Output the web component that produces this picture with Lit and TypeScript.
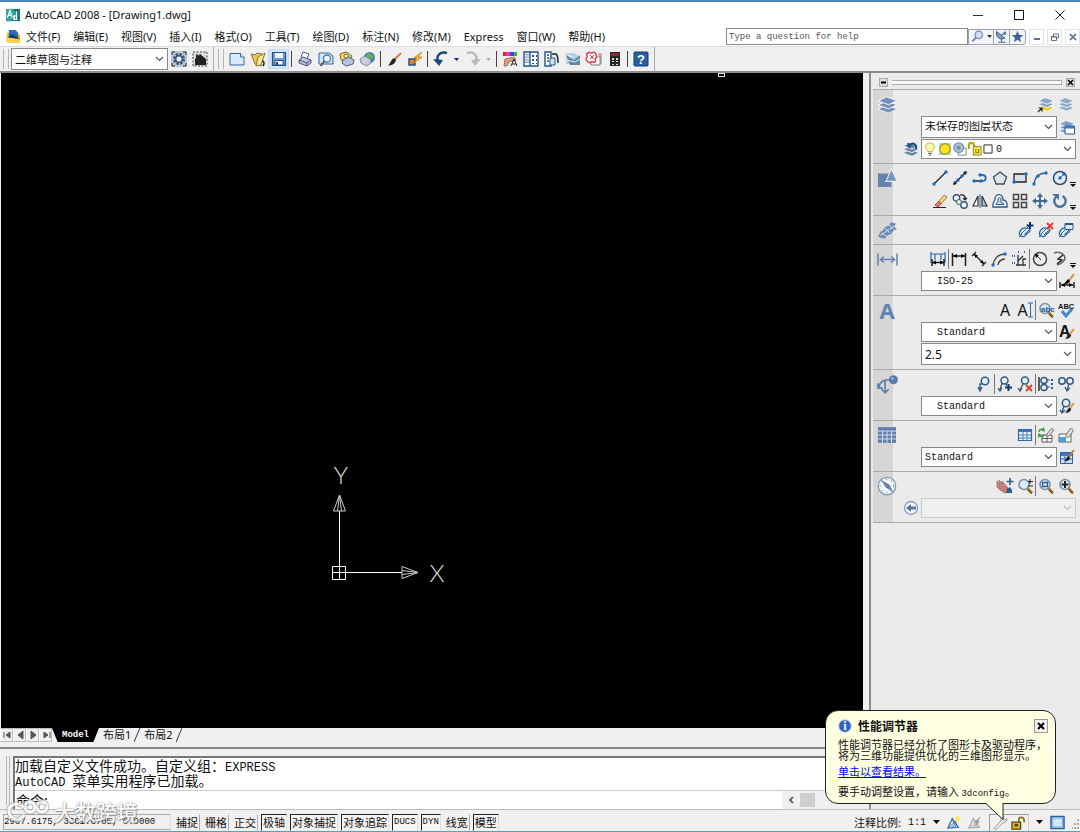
import { LitElement, html, svg, css } from "lit";
import { customElement, property } from "lit/decorators.js";

const B = "#2b578c";
const K = "#222";

const layers = (c: string, c2: string) => svg`
  <path d="M0 12 7 8.500l9 3.200-7 3.500z" fill="${c2}" stroke="#fff" stroke-width=".6"/>
  <path d="M0 8.500 7 5l9 3.200-7 3.500z" fill="${c}" stroke="#fff" stroke-width=".8"/>
  <path d="M0 5 7 1.500l9 3.200-7 3.500z" fill="${c}" stroke="#fff" stroke-width=".8"/>`;
const dot = (x: number, y: number) => svg`<circle cx="${x}" cy="${y}" r="1.700" fill="#1870c8"/>`;
const brush = svg`<path d="m15 5-5 6" stroke="#e0a050" stroke-width="2"/><path d="m10.500 9.500 1.800 1.500c-1 3-3.300 4-6.300 4 2-1.500 2-4 4.500-5.500z" fill="#222"/>`;
const magnifier = svg`<path d="m10 10 5 5" stroke="#b0741f" stroke-width="2.600"/><path d="m11 12 3.500 3.500" stroke="#3c2a12" stroke-width="1"/><circle cx="7" cy="6.500" r="5" fill="#dcebf8" stroke="#7b8ea3" stroke-width="1.600"/>`;
const bolt = svg`<path d="M15 1 7 7h3l-4 6 9-7h-4z" fill="#ffc928" stroke="#a06a10" stroke-width=".7"/>`;
const annot = (c: string) => svg`<path d="M1 15 6 4l7 10z" fill="none" stroke="${c}" stroke-width="1.500"/><path d="m2 14 11-9M5 14l6-5M6 5l4 9" stroke="${c}" fill="none"/>`;
const hatch = svg`<path d="M2 13.500C0 10 4 5 8 6c4 0 5 2 3 4s-2 1-3 3-4 2-6 .5z" fill="#dce9f6" stroke="#2e6199" stroke-width="1.200"/><path d="M3 12 9 6M6 13l5-5M1 15l3-3m3-4 4-4" fill="none" stroke="#2e6199"/>`;

const icons: Record<string, unknown> = {
  app: svg`<path d="M0 1h16v14H0z" fill="#187878"/><path d="M0 1h8l3 5-5 9H0z" fill="#39a59d"/><path d="m1.500 11 3-8 2.500 8M2.500 8.500h4M9 14V9.500M12 4v9H9.500V9H13" fill="none" stroke="#fff" stroke-width="1.400"/>`,
  doc: svg`<path d="M1 4h11l3 3v8H1z" fill="#f2b91d"/><path d="M3 1h7l3 3v6H3z" fill="#2f6cb0"/><path d="m2 9 4-4 9 6v1z" fill="#183f72"/><path d="m0 6 2 3 13 2v4H1z" fill="#ffd24a"/>`,
  gear: svg`<path d="M0 0h16v16H0z" fill="#b7c6d8"/><path d="M1 4V1h3m8 0h3v3m0 8v3h-3m-8 0H1v-3" stroke="#333" fill="none"/><circle cx="8" cy="8" r="4.500" fill="none" stroke="#3e5572" stroke-width="3" stroke-dasharray="2.300 1.200"/><circle cx="8" cy="8" r="3.300" fill="#e8edf3" stroke="#3e5572" stroke-width="1.500"/>`,
  home: svg`<path d="M1 1h14v14H1z" fill="#ddd" stroke="#444" stroke-dasharray="2 1.500"/><path d="m8 3 6 5v6H3V8l1-1V3.500h2V5z" fill="#222"/>`,
  new: svg`<path d="M1 2.500h10.500L15 6v8H1z" fill="#d7ebf9" stroke="#34659c"/><path d="M11.500 2.500V6H15" fill="#fff" stroke="#34659c"/>`,
  open: svg`<path d="m1 3 4 1 2-2 5 1-1 12-6-2z" fill="#e8c657" stroke="#8c7430"/><path d="m8 6 7-4-4 12-5 1z" fill="#f7e6a0" stroke="#8c7430"/><path d="M12 10c2 0 3 2 1 5" fill="none" stroke="#222" stroke-width="1.500"/>`,
  save: svg`<path d="M1.500 1.500h13v13h-13z" fill="#6a9bd4" stroke="#254f85" stroke-width="1.200"/><path d="M4 2h8v5H4z" fill="#f2f7fc"/><path d="M4 9.500h8V14H4z" fill="#fff" stroke="#254f85"/><path d="M5 11h2v3H5z" fill="#254f85"/>`,
  print: svg`<path d="m4 6 2-5 6 2-2 5z" fill="#fff" stroke="#555c88"/><path d="m2 9 4-3 8 3v3l-4 3-8-3z" fill="#bfc5df" stroke="#4d5583"/><path d="m2 9 8 3 4-3m-4 3v3" fill="none" stroke="#4d5583"/>`,
  preview: svg`<path d="M1 2h10l4 3v8H1z" fill="#cfe5f6" stroke="#34659c"/><circle cx="9" cy="7.500" r="3.500" fill="#eef7ff" stroke="#56799e" stroke-width="1.300"/><path d="m6.500 10-4 5" stroke="#555" stroke-width="2"/>`,
  publish: svg`<path d="m1 3 6-2 6 4-3 6-8-2z" fill="#f5d64b" stroke="#7d6d2b"/><path d="m4 9 6-3 5 3-1 4-7 2-4-3z" fill="#b8c3e0" stroke="#4d5f88"/><circle cx="7" cy="5" r="2" fill="#fff" stroke="#7d6d2b"/>`,
  web: svg`<circle cx="9.500" cy="6.500" r="5.500" fill="#3f82b5"/><path d="M6 3c3-2 4 1 7 1 2 3-2 5-4 4S6 5 6 3z" fill="#68ae5b"/><path d="m0 8 5-3 6 4-1 4-4 2-5-3z" fill="#c7cee0" stroke="#6a7898" stroke-width=".8"/>`,
  brush: svg`<path d="m15 2-7 7" stroke="#c98540" stroke-width="2.200"/><path d="m8 7 2 2c-1 4-4 5-8 6 2-2 2-5 6-8z" fill="#222"/>`,
  match: svg`<path d="M2 8h6v6H2z" fill="#e77c4c" stroke="#294f83" stroke-width="1.500"/>${bolt}`,
  undo: svg`<path d="M14 2C7 0 3 5 5 10" fill="none" stroke="#1d4778" stroke-width="2.500"/><path d="m0 8 10 1-4 6z" fill="#1d4778"/>`,
  redo: svg`<path d="M2 2c7-2 11 3 9 8" fill="none" stroke="#bababa" stroke-width="2.500"/><path d="M16 8 6 9l4 6z" fill="#bababa"/>`,
  props: svg`<path d="M1 1h3v4H1z" fill="#e22"/><path d="M4 1h4v4H4z" fill="#ec30c8"/><path d="M8 1h4v4H8z" fill="#2a4ae0"/><path d="M12 1h3v4h-3z" fill="#20bd42"/><path d="m2 15 1-7 9-2 2 3-7 2-2 4z" fill="#dca07c" stroke="#84503b" stroke-width=".7"/><path d="m9 15 3-7 3 7m-5-2h4" fill="none" stroke="#222"/>`,
  design: svg`<path d="M1 1h14v14H1zM7 1v14" fill="#fff" stroke="#25528a" stroke-width="1.400"/><path d="M3 3v10M5 3v10" stroke="#25528a" stroke-dasharray="1.500 1"/><path d="M9 4h2v2H9zm4 0h1v2h-1zM9 8h2v2H9zm4 0h1v2h-1zm-4 4h2v1H9zm4 0h1v1h-1z" fill="#25528a"/>`,
  palette: svg`<path d="M1 1h6v14H1z" fill="#fff" stroke="#25528a" stroke-width="1.400"/><path d="M3 4h2M3 7h2m-2 3h2" stroke="#25528a" stroke-width="1.500"/><path d="M6 7h5v7H6z" fill="#d5e6f4" stroke="#25528a"/><path d="M8 3h4c2 1 2 4 2 9" fill="none" stroke="#222" stroke-width="1.500"/>`,
  sheets: svg`<path d="M1 2h9l5 4v7H1z" fill="#b9cfdf"/><path d="m1 4 8 5 6-5v10H5z" fill="#5f8aa9"/><path d="m1 9 9 2 5-3M2 4l6 2" stroke="#e8f1f7" fill="none"/>`,
  markup: svg`<path d="M5 5h9v9H5zM7 3h8v10" fill="#fff" stroke="#777"/><path d="M0 1h12v11H0z" fill="#fff"/><path d="M2 2c2-2 3 1 4 0 3-2 4 1 4 2s2 2 0 3 1 3-1 4-2-1-4 0-2 1-4-1-1-2 0-4-2-3 1-4z" fill="none" stroke="#e33b4b" stroke-width="1.500"/><path d="m4 4 4 4m0-4L4 8" stroke="#e33b4b"/>`,
  calc: svg`<path d="M3 1h10v14H3z" fill="#252525"/><path d="M4 2h8v3H4z" fill="#8d2b2b"/><path d="M5 7h2v2H5zm4 0h2v2H9zm-4 3h2v1H5zm4 0h2v1H9zm-4 3h2v1H5zm4 0h2v1H9z" fill="#ddd"/>`,
  help: svg`<rect x="1" y="1" width="14" height="14" rx="1" fill="#285f9d" stroke="#173f70"/><text x="8" y="13" text-anchor="middle" font-family="Liberation Sans" font-size="13" font-weight="bold" fill="#fff">?</text>`,
  search: svg`<path d="m6.500 9-5 5" stroke="#7889a8" stroke-width="2.500"/><circle cx="9.500" cy="6" r="4.500" fill="#d2dff1" stroke="#7889b5" stroke-width="1.500"/>`,
  dish: svg`<path d="M2 2c-1 7 5 11 10 8zM8 7l5-5M8 10v4m-4 1h9" fill="#8da8ce" stroke="#3f5c8c" stroke-width="1.300"/><circle cx="12" cy="4" r="2" fill="#66789a"/>`,
  star: svg`<path d="m8 1 2 5 5 .3-4 3.400 1.500 5.300L8 12l-4.500 3L5 9.700 1 6.300 6 6z" fill="#405e90"/>`,
  layersBig: layers("#7390b8", "#7390b8"),
  layersY: svg`${layers("#8aa7c4", "#f0c633")}<path d="m0 16 4-4m-3.500 0H4v3.500" stroke="#222" fill="none" stroke-width="1.200"/>`,
  layers: layers("#8facc8", "#8facc8"),
  layerMgr: svg`${layers("#7f9cc4", "#7f9cc4")}<path d="M6 7h9.500v8H6z" fill="#fff" stroke="${B}"/><path d="M6 7h9.500v2.500H6z" fill="#347ac0"/>`,
  layerPrev: svg`${layers("#6d86a8", "#6d86a8")}<path d="M13 8c1-5-3-7-6-4" fill="none" stroke="#224b7f" stroke-width="2"/><path d="m4 2 5 1-3 5z" fill="#224b7f"/>`,
  bulb: svg`<path d="M5.500 11C5 9 3 8 3 5.500a5 4.500 0 0 1 10 0C13 8 11 9 10.500 11z" fill="#fff8a8" stroke="#b9a632"/><path d="M6 13h4m-3 2h2" stroke="#666" stroke-width="1.500"/>`,
  sun: svg`<path d="M1 1h14v14H1z" fill="#b5d5ed"/><circle cx="8" cy="8" r="6" fill="#ffe51d" stroke="#a89d12" stroke-width="1.500"/>`,
  sunvp: svg`<path d="M6 7h9v8H6z" fill="#fff" stroke="#678"/><circle cx="6.500" cy="6.500" r="5.500" fill="#a9c2d8" stroke="#7894ae" stroke-width="1.500"/><circle cx="6.500" cy="6.500" r="2.300" fill="#6c91b3"/>`,
  lock: svg`<path d="M1 8V4c0-4 6-4 6 0v4" fill="none" stroke="#b0ab1c" stroke-width="2.500"/><path d="M6 5h9v10H6z" fill="#efe545" stroke="#84801d"/><path d="M9 8v4h3V8" fill="none" stroke="#84801d" stroke-width="1.200"/>`,
  square: svg`<path d="M1.500 1.500h13v13h-13z" fill="#fff" stroke="#222" stroke-width="1.500"/>`,
  drawBig: svg`<path d="M0 4h12v12H0z" fill="#6483ad"/><path d="m12 0 5 11H7z" fill="#7895bd" stroke="#ebebeb"/>`,
  line: svg`<path d="M2 14 14 2" stroke="${K}" stroke-width="1.300"/>${dot(2, 14)}${dot(14, 2)}`,
  xline: svg`<path d="M2 14 14 2" stroke="${K}" stroke-width="1.500"/><path d="m1 15 1-4 3 3zM15 1l-1 4-3-3z" fill="${K}"/>${dot(6, 10)}${dot(10, 6)}`,
  pline: svg`<path d="M8 11h2c5 0 5-6 0-6H8" fill="none" stroke="#2b69a8" stroke-width="1.800"/><path d="M2 11h6" stroke="${K}" stroke-width="1.500"/>${dot(2, 11)}${dot(9, 11)}${dot(8, 5)}`,
  polygon: svg`<path d="m8 2 6.500 5L12 14H4L1.500 7z" fill="#dbe6ef" stroke="#384b5f" stroke-width="1.300"/>`,
  rect: svg`<path d="M2 4h12v8H2z" fill="#d7e4ef" stroke="${K}" stroke-width="1.300"/>${dot(2, 12)}${dot(14, 4)}`,
  arc: svg`<path d="M2 14C3 7 7 3 14 3" fill="none" stroke="#3d6287" stroke-width="1.400"/>${dot(2, 14)}${dot(6, 6)}${dot(14, 3)}`,
  circle: svg`<circle cx="8" cy="8" r="6.500" fill="#e4edf5" stroke="#334c66" stroke-width="1.500"/><path d="m8 8 4-4" stroke="#1870c8"/>${dot(8, 8)}${dot(12, 4)}`,
  erase: svg`<path d="m3 12 4-4 2 3-3 3z" fill="#ee7965" stroke="#924" stroke-width=".8"/><path d="m7 8 5-6 3 2-6 7z" fill="#ffd27a" stroke="#86702c" stroke-width=".8"/><path d="M1 14.500h13" stroke="${K}"/>`,
  copy: svg`<circle cx="4.500" cy="5" r="3.200" fill="#eef4fa" stroke="#365879" stroke-width="1.400"/><circle cx="12" cy="12" r="3.200" fill="#eef4fa" stroke="#365879" stroke-width="1.400"/><circle cx="7" cy="9" r="2.500" fill="#eef4fa" stroke="#365879"/><path d="M8 2c4-1 6 2 5 5m-2-2 2 2 2-2" fill="none" stroke="#222" stroke-width="1.200"/>`,
  mirror: svg`<path d="M6 3v10H1z" fill="#fff" stroke="#333" stroke-width="1.200"/><path d="M10 3v10h5z" fill="#b7c7d8" stroke="#333" stroke-width="1.200"/><path d="M8 1v14" stroke="#2d6aab"/>`,
  offset: svg`<path d="M1 14h14v-3c0-2-2-4-4-4 0-7-8-7-8-1 0 2-2 3-2 5z" fill="#fff" stroke="${B}" stroke-width="1.300"/><path d="M4 11.500h8c0-2-3-2-3-2V6c0-2-3-2-3 0v3c-1 0-2 .5-2 2.500z" fill="#c3d9ed" stroke="${B}"/>`,
  array: svg`<path d="M1.500 1.500h5v5h-5zm8 0h5v5h-5zm-8 8h5v5h-5zm8 0h5v5h-5z" fill="#eee" stroke="#444" stroke-width="1.500"/>`,
  move: svg`<path d="M8 2v12M2 8h12" stroke="#416a9c" stroke-width="2"/><path d="m8 0 3 4H5zm0 16 3-4H5zM0 8l4-3v6zm16 0-4-3v6z" fill="#416a9c"/>`,
  rotate: svg`<path d="M10.500 3A5.700 5.700 0 1 1 4 4" fill="none" stroke="#4a709e" stroke-width="2.400"/><path d="M0 1h7v6z" fill="#4a709e"/>`,
  hatchBig: svg`<path d="m0 13 2-4 2-1 2-3 3-1 2-3 4 1-1 3 2 2-3 1-2 3-3 1-2 3-4-1z" fill="#6c8bb5"/><path d="m3 10 4 3M6 6l4 4M9 3l4 4M2 12 14 4" stroke="#fff" stroke-width=".6"/>`,
  hatchAdd: svg`${hatch}<path d="M12 0v7M8.500 3.500h7" stroke="#13365f" stroke-width="2"/>`,
  hatchDel: svg`${hatch}<path d="m9 1 6 6m0-6L9 7" stroke="#e33b33" stroke-width="2"/>`,
  hatchMgr: svg`${hatch}<path d="M7 1.500h8v6H7z" fill="#dceafa" stroke="${B}"/><path d="M7 1.500h8V3H7z" fill="${B}"/>`,
  dimBig: svg`<path d="M0 3v10M16 3v10M2 8h12M5 5.500 2 8l3 2.500m6-5L14 8l-3 2.500" fill="none" stroke="#6685b2" stroke-width="1.300"/>`,
  dim1: svg`<path d="M1 1v11M15 1v11M5 3v6m6-6v6M1 3h14" stroke="#2d6aab" stroke-width="1.200"/><path d="M2 8v7m12-7v7M2 11.500h12" stroke="${K}" stroke-width="1.500"/><path d="m2 11.500 4-2v4zm12 0-4-2v4z"/>`,
  dim2: svg`<path d="M1.500 2v13m13-13v13M2 5h12" stroke="${K}" stroke-width="1.500"/><path d="m2 5 4-2v4zm12 0-4-2v4z"/>`,
  dim3: svg`<path d="m1 5 4-4M11 15l4-4M3 3l10 10" stroke="${K}" stroke-width="1.300"/><path d="m3 3 4 1.500L4.500 7zm10 10-4-1.500L11.500 9z"/>`,
  dim4: svg`<path d="M2 14C3 8 7 3 14 3M7 14c0-3 3-6 7-6" fill="none" stroke="#444" stroke-width="1.500"/>${dot(2, 14)}${dot(14, 3)}`,
  dim5: svg`<path d="M5 14h10M7 14V4m0 6 5-5m0 9V8h3" fill="none" stroke="#333" stroke-width="1.300"/><path d="M1 5h3M1 12h3M7 1h2m4 0h2" stroke="#2d6aab" stroke-width="2" stroke-dasharray="1"/>`,
  dim6: svg`<circle cx="8" cy="8" r="6.500" fill="#eee" stroke="#444" stroke-width="1.500"/><path d="m9 9-5-5" stroke="${K}"/><path d="m3 3 4 1-3 3z"/>`,
  dim7: svg`<path d="M2 2c5-2 11 1 11 5s-5 6-8 7" fill="none" stroke="#666" stroke-width="1.500"/><path d="m11 4-5 4 4 1-5 4" fill="none" stroke="${K}" stroke-width="1.400"/>`,
  dimStyle: svg`<path d="M1 9v6m14-6v6M2 12h12" stroke="${K}" stroke-width="1.500"/><path d="m2 12 4-2v4zm12 0-4-2v4z"/><path d="m15 1-6 8" stroke="#c9924b" stroke-width="2"/><path d="m9 6 2 2c-1 3-4 3-6 3z"/>`,
  zoomabc: svg`${magnifier}<text x="3" y="9.500" font-family="Liberation Sans" font-size="8" font-weight="bold" fill="#24589a">abc</text>`,
  spell: svg`<path d="m4 9 4 5 6-7" stroke="#4387cd" stroke-width="3" fill="none"/><text x="0" y="7" font-family="Liberation Sans" font-size="7.500" font-weight="bold" fill="#111">ABC</text>`,
  textStyle: svg`<text x="0" y="13" font-family="Liberation Sans" font-size="16" font-weight="bold" fill="#111">A</text>${brush}`,
  leaderBig: svg`<path d="M1 10c1-5 4-6 9-6M6 5v10m-3-3 3 3 3-3M0 7v4h4" fill="none" stroke="#5d7eac" stroke-width="1.400"/><circle cx="13" cy="4" r="3.800" fill="#5c7dac"/><circle cx="12" cy="3" r="1" fill="#afc3df"/>`,
  lead: svg`<circle cx="9" cy="5" r="3.700" fill="#e7f0f8" stroke="#315b89" stroke-width="1.600"/><path d="M7 8H4v6m-2-3 2 4 2-4" fill="none" stroke="#315b89" stroke-width="1.400"/>`,
  leadAdd: svg`<circle cx="7.500" cy="4.500" r="3.500" fill="#e7f0f8" stroke="#315b89" stroke-width="1.500"/><path d="M5 7 3 14m-2-2 2 3 2-3M9 8l1 2" fill="none" stroke="#315b89" stroke-width="1.300"/><path d="M11.500 8v7M8 11.500h7" stroke="#123b6b" stroke-width="2"/>`,
  leadDel: svg`<circle cx="8" cy="4.500" r="3.500" fill="#e7f0f8" stroke="#315b89" stroke-width="1.500"/><path d="M6 8 3 14m-2-2 2 3 2-3" fill="none" stroke="#315b89" stroke-width="1.300"/><path d="m9 9 6 6m0-6-6 6" stroke="#e1382c" stroke-width="1.800"/>`,
  leadAlign: svg`<path d="M1 1v14" stroke="${K}" stroke-width="1.400"/><circle cx="6" cy="4.500" r="3" fill="none" stroke="#315b89" stroke-width="1.500"/><circle cx="6" cy="11.500" r="3" fill="none" stroke="#315b89" stroke-width="1.500"/><path d="M9 4h3m-3 7h3" stroke="#315b89"/><path d="M13 3h2v2h-2zm0 8h2v2h-2zM13 7h2v2h-2z" fill="#315b89"/>`,
  leadCollect: svg`<circle cx="4" cy="5" r="3.200" fill="none" stroke="#315b89" stroke-width="1.500"/><circle cx="12" cy="5" r="3.200" fill="none" stroke="#315b89" stroke-width="1.500"/><path d="M11 8 9 14m-2-3 2 4 3-3" fill="none" stroke="#315b89" stroke-width="1.300"/>`,
  leadStyle: svg`<circle cx="7" cy="5" r="3.700" fill="#e7f0f8" stroke="#315b89" stroke-width="1.500"/><path d="M5 8 3 14m-2-2 2 3 3-3" fill="none" stroke="#315b89" stroke-width="1.400"/>${brush}`,
  tableBig: svg`<path d="M0 1h16v14H0z" fill="#5f7fac"/><path d="M0 4.500h16M0 8h16M0 11.500h16M4 4.500V15M8 4.500V15M12 4.500V15" stroke="#dfe6f0" stroke-width=".8"/>`,
  table: svg`<path d="M1.500 2.500h13v11h-13z" fill="#eaf3fc" stroke="#3267ae" stroke-width="1.200"/><path d="M2 3h12v2H2z" fill="#3b76c3"/><path d="M2 8h12M2 11h12M6 5v8m4-8v8" stroke="#4a7ec0"/>`,
  tableUpd: svg`<path d="M4 8h10v7H4zM4 11.500h10M9 8v7" fill="#fff" stroke="#555"/><path d="m9 7 4-5c2-1 3 1 2 2l-4 5c-1 1-3 0-2-2z" fill="#ddd" stroke="#777"/><path d="M1 5c0-3 3-3 5-2M6 8c-1 2-3 2-5 0" fill="none" stroke="#35a338" stroke-width="1.600"/><path d="m6 0 1 5-4-2zM0 11l0-5 4 2z" fill="#35a338"/>`,
  tableExt: svg`<path d="M1 7h12v8H1z" fill="#fff" stroke="#567"/><path d="M1 10h7v5H1z" fill="#4ba1de"/><path d="m8 8 4-6c2-1 4 1 3 2l-4 6c-1 1-4 0-3-2z" fill="#ddd" stroke="#777"/>`,
  tableStyle: svg`<path d="M1.500 3.500h12v11h-12z" fill="#cadef5" stroke="#315f9e"/><path d="M2 4h11v3H2z" fill="#3b76c3"/><path d="M2 10h11M6 7v7" stroke="#315f9e"/><path d="m15 1-6 8" stroke="#b68040" stroke-width="2"/><path d="m9 7 2 2c-1 3-4 3-5 3z"/>`,
  compass: svg`<circle cx="8" cy="8" r="7" fill="#f2f4f7" stroke="#8399b5"/><circle cx="8" cy="8" r="5.300" fill="none" stroke="#8399b5" stroke-dasharray="1 3"/><path d="m3 3 7 4 3 6-6-4z" fill="#6482a9"/>`,
  pan: svg`<path d="m0 3 3 3-1-4 3 4V3l6 7v4l-3 1-5-3-3-3z" fill="#c78078" stroke="#965f5c" stroke-width=".7"/><path d="M13 0v7M9.500 3.500h7" stroke="#305f98" stroke-width="1.600"/><path d="m9 15 1-4 3-2 2 3v3z" fill="#2f5a92"/>`,
  zoomRt: svg`${magnifier}<path d="M13 1v5m-2-2.500h5M11 8h5" stroke="#222"/>`,
  zoomWin: svg`${magnifier}<path d="M4.500 4.500h5v4h-5z" fill="none" stroke="${B}" stroke-width="1.400"/>`,
  zoomExt: svg`${magnifier}<path d="M7 3v7M3.500 6.500h7" stroke="${K}" stroke-width="2"/>`,
  back: svg`<circle cx="8" cy="8" r="6.500" fill="#f4f6f9" stroke="#8ba2bf" stroke-width="1.400"/><path d="m3 8 5-4v2.500h5v3H8V12z" fill="#5777a3"/>`,
  scaleVis: svg`${annot("#3f72aa")}<circle cx="12" cy="4" r="3" fill="#ffe667"/>`,
  scaleAuto: svg`${annot("#aaa")}<path d="m15 1-8 7h3l-3 6 7-7h-3z" fill="#999"/>`,
  wrench: svg`<path d="m1 14 8-8c-1-3 1-5 4-5l-2 3 2 1 3-2c0 4-3 5-5 5l-8 8z" fill="#eee" stroke="#888"/>`,
  trayLock: svg`<path d="M9 7V4c0-4 6-3 6 1v2" fill="none" stroke="#8a7412" stroke-width="2"/><path d="M1 7h10v8H1z" fill="#d9b520" stroke="#514716" stroke-width="1.400"/><path d="M4 9h4v3H4z" fill="#514716"/>`,
  clean: svg`<path d="M1 1.500h14v13H1z" fill="#8cb8e6" stroke="#2d619d" stroke-width="1.500"/><path d="M3.500 4h9v8h-9z" fill="#d5e8f9"/>`,
  info: svg`<circle cx="8" cy="8" r="7" fill="#2e61cd" stroke="#99a6c9"/><text x="8" y="13" text-anchor="middle" font-family="Liberation Serif" font-size="14" font-weight="bold" fill="#fff">i</text>`,
};

const ic = (name: string, size = 16) =>
  html`<svg class="ic" width=${size} height=${size} viewBox="0 0 16 16" overflow="visible" aria-hidden="true">${icons[name]}</svg>`;

const base = css`
  * { box-sizing: border-box; }
  .ic { display: block; flex: none; }
  button {
    font: inherit; color: inherit; border: 0; padding: 0; margin: 0; background: none;
    display: flex; align-items: center; justify-content: center; flex: none;
  }
`;

@customElement("cad-combo")
class CadCombo extends LitElement {
  @property() label = "";
  @property() value = "";
  @property({ type: Boolean }) disabled = false;
  static styles = [base, css`
    :host { display: flex; align-items: center; position: relative; background: #fff; border: 1px solid #888; height: 20px; min-width: 0; }
    :host([tall]) { height: 22px; }
    :host([disabled]) { background: #efefef; border-color: #ccc; }
    select {
      appearance: none; border: 0; background: none; outline: 0; flex: 1; min-width: 0; height: 100%;
      padding: 0 20px 0 3px; margin: 0; color: #111; opacity: 1; font-family: inherit; font-size: inherit;
    }
    :host([indent]) select { padding-left: 15px; }
    .chev { position: absolute; right: 3px; top: 50%; margin-top: -4px; pointer-events: none; }
  `];
  render() {
    return html`<slot></slot>
      <select aria-label=${this.label} ?disabled=${this.disabled}><option>${this.value}</option></select>
      <svg class="chev" width="9" height="8" viewBox="0 0 9 8"><path d="m1 2 3.500 3.500L8 2" fill="none" stroke=${this.disabled ? "#bbb" : "#555"} stroke-width="1.200"/></svg>`;
  }
}

@customElement("cad-dashboard")
class CadDashboard extends LitElement {
  static styles = [base, css`
    :host { display: block; background: #ebebeb; border-left: 2px solid #8c8c8c; padding-left: 2px; font-family: "Liberation Mono", "Noto Sans CJK SC", monospace; font-size: 10px; }
    .head { display: flex; align-items: center; gap: 4px; height: 16px; padding: 3px 5px 0 6px; }
    .head button { width: 9px; height: 9px; background: #ddd; border: 1px solid #aaa; }
    .grip { flex: 1; height: 5px; border: solid #aaa; border-width: 1px 1px 1px 0; background: #f8f8f8; }
    section {
      display: flex; border-top: 1px solid #a9a9ad; padding: 3px 4px 4px 4px;
      background: linear-gradient(to right, #d6d6d6 20px, #ebebeb 20px);
    }
    section.plain { padding-bottom: 3px; }
    section:last-of-type { border-bottom: 1px solid #a9a9ad; }
    .mark { width: 20px; height: 22px; display: flex; align-items: center; justify-content: center; flex: none; }
    .mark b { font: bold 22px "Noto Sans", sans-serif; line-height: 22px; color: #6283b0; }
    .rows { flex: 1; display: flex; flex-direction: column; gap: 1px; min-width: 0; }
    .tools { display: flex; justify-content: flex-end; height: 22px; align-items: center; }
    .tools button { width: 20px; height: 20px; }
    .tools button.letter { font: 16px "Noto Sans", sans-serif; color: #111; }
    .tools i { width: 1px; height: 20px; background: #777; }
    .fly { width: 6px; height: 22px; display: flex; align-items: flex-end; }
    .ctl { display: grid; grid-template-columns: 22px 1fr 17px; column-gap: 2px; align-items: center; }
    .ctl > .ic:first-child { justify-self: end; }
    .ctl cad-combo { grid-column: 2; }
    .ctl cad-combo.wide { grid-column: 2 / 4; }
    .cjk { font-size: 11px; }
    .sans { font: 12px "Noto Sans", sans-serif; }
    .li { margin-left: 1px; }
  `];
  private tools(names: string[], fly = false) {
    return html`<div class="tools">${names.map(n =>
      n === "|" ? html`<i></i>`
      : n === "A" || n === "AI"
        ? html`<button class="letter" aria-label=${n === "A" ? "多行文字" : "单行文字"}>A${n === "AI" ? html`<svg width="5" height="16" viewBox="0 0 5 16"><path d="M0 1h5M0 15h5M2.500 1v14" stroke="#2d6aab"/></svg>` : ""}</button>`
        : html`<button aria-label=${n}>${ic(n)}</button>`)}
      ${fly ? html`<span class="fly"><svg width="6" height="8" viewBox="0 0 6 8"><path d="M0 1h6v1H0zM0 3h6L3 6z" fill="#111"/></svg></span>` : ""}</div>`;
  }
  private panel(mark: unknown, rows: unknown, plain = false) {
    return html`<section class=${plain ? "plain" : ""}><div class="mark">${mark}</div><div class="rows">${rows}</div></section>`;
  }
  render() {
    return html`
      <div class="head">
        <button aria-label="最小化"><svg width="7" height="7"><path d="M1 3.500h5" stroke="#000" stroke-width="2"/></svg></button>
        <span class="grip"></span>
        <button aria-label="关闭"><svg width="7" height="7"><path d="m1 1 5 5m0-5L1 6" stroke="#000" stroke-width="1.500"/></svg></button>
      </div>
      ${this.panel(ic("layersBig", 19), html`
        ${this.tools(["layersY", "layers"])}
        <div class="ctl"><cad-combo tall class="cjk" label="图层状态" value="未保存的图层状态"></cad-combo>${ic("layerMgr")}</div>
        <div class="ctl">${ic("layerPrev")}<cad-combo class="wide" label="图层" value="0">
          ${["bulb", "sun", "sunvp", "lock", "square"].map(n => html`<span class="li">${ic(n, n === "square" ? 10 : 14)}</span>`)}
        </cad-combo></div>`)}
      ${this.panel(ic("drawBig", 18), html`
        ${this.tools(["line", "xline", "pline", "polygon", "rect", "arc", "circle"], true)}
        ${this.tools(["erase", "copy", "mirror", "offset", "array", "move", "rotate"], true)}`, true)}
      ${this.panel(ic("hatchBig", 19), this.tools(["hatchAdd", "hatchDel", "hatchMgr"]), true)}
      ${this.panel(ic("dimBig", 19), html`
        ${this.tools(["dim1", "|", "dim2", "dim3", "dim4", "dim5", "|", "dim6", "dim7"], true)}
        <div class="ctl"><cad-combo indent label="标注样式" value="ISO-25"></cad-combo>${ic("dimStyle")}</div>`)}
      ${this.panel(html`<b>A</b>`, html`
        ${this.tools(["A", "AI", "|", "zoomabc", "spell"])}
        <div class="ctl"><cad-combo indent label="文字样式" value="Standard"></cad-combo>${ic("textStyle")}</div>
        <div class="ctl"><cad-combo tall class="wide sans" label="文字高度" value="2.5"></cad-combo></div>`)}
      ${this.panel(ic("leaderBig", 19), html`
        ${this.tools(["lead", "|", "leadAdd", "leadDel", "|", "leadAlign", "leadCollect"])}
        <div class="ctl"><cad-combo indent label="引线样式" value="Standard"></cad-combo>${ic("leadStyle")}</div>`)}
      ${this.panel(ic("tableBig", 18), html`
        ${this.tools(["table", "|", "tableUpd", "tableExt"])}
        <div class="ctl"><cad-combo label="表格样式" value="Standard"></cad-combo>${ic("tableStyle")}</div>`)}
      ${this.panel(ic("compass", 20), html`
        ${this.tools(["pan", "zoomRt", "|", "zoomWin", "zoomExt"])}
        <div class="ctl">${ic("back")}<cad-combo class="wide" disabled label="视图" value=""></cad-combo></div>`)}`;
  }
}

@customElement("app-root")
class AppRoot extends LitElement {
  static styles = [base, css`
    :host {
      display: flex; flex-direction: column; position: relative; height: 100vh; overflow: hidden; box-sizing: border-box;
      border-top: 2px solid #4f86ba; border-bottom: 1px solid #4f9fd8; background: #f0f0f0; color: #111;
      font: 12px "Noto Sans", "Noto Sans CJK SC", sans-serif;
    }
    .title { display: flex; align-items: center; height: 25px; background: #fff; padding-left: 6px; gap: 5px; flex: none; }
    .title h1 { flex: 1; margin: 0; font-size: 11px; font-weight: 400; }
    .win { display: flex; }
    .win button { width: 41px; height: 24px; }
    .menu { display: flex; align-items: center; height: 19px; background: #fff; padding-left: 6px; flex: none; }
    .menu nav { display: flex; flex: 1; gap: 13px; padding-left: 5px; line-height: 18px; white-space: nowrap; font-size: 11px; }
    .ask { width: 242px; height: 17px; margin: 0; border: 1px solid #8a8a8a; padding: 0 2px; background: #fff; font: 9px "Liberation Mono", monospace; color: #555; outline: 0; }
    .ask::placeholder { color: #555; opacity: 1; }
    .info { display: flex; height: 16px; border: 1px solid #9aa0a8; border-radius: 0 3px 3px 0; margin-right: 3px; background: #f2f4f8; }
    .info button { width: 16px; }
    .info button + button { border-left: 1px solid #9aa0a8; }
    .info .wide { width: 24px; gap: 3px; }
    .mdi { display: flex; gap: 3px; }
    .mdi button { width: 15px; height: 16px; border: 1px solid #e4e4e4; }
    .bar { display: flex; align-items: stretch; height: 27px; border-top: 1px solid #ddd; border-bottom: 2px solid #8c8c8c; flex: none; padding-left: 3px; }
    .grip { width: 6px; margin: 2px 2px 2px 0; border: solid #b5b5b5; border-width: 0 1px; }
    .bar cad-combo { width: 157px; margin: 2px 0; font: 11px "Noto Sans CJK SC", sans-serif; }
    .bar cad-combo::part(select) { padding-left: 6px; }
    .group { display: flex; align-items: center; border-right: 1px solid #aaa; padding-right: 3px; margin-right: 4px; }
    .group button { width: 21px; height: 20px; }
    .group button.on { background: #d4e6f6; outline: 1px solid #c4dcf2; outline-offset: -1px; }
    .group button.dd { width: 11px; }
    .group i { width: 1px; height: 16px; background: #444; margin: 0 2px; }
    .main { display: flex; flex: 1; min-height: 0; border-bottom: 1px solid #bcbcbc; }
    .left { flex: 1; min-width: 0; display: flex; flex-direction: column; margin-right: 6px; }
    cad-dashboard { width: 211px; flex: none; }
    .canvas { flex: 1; background: #000; position: relative; margin-left: 1px; min-height: 0; }
    .ucs { position: absolute; left: 318px; bottom: 135px; }
    .handle { position: absolute; left: 717px; top: 0; width: 7px; height: 4px; border: 1px solid #ddd; }
    .tabs { display: flex; align-items: stretch; height: 14px; flex: none; font-size: 11px; line-height: 14px; }
    .tabs button.nav { width: 13px; border: 1px solid #bbb; border-left-color: #fff; }
    .tab { padding: 0 3px 0 4px; }
    .tab.model { width: 47px; background: #000; color: #fff; clip-path: polygon(0 0, 100% 0, 88% 100%, 12% 100%); font: bold 9px "Liberation Mono", monospace; padding: 0; }
    .slash { display: block; flex: none; }
    .split { height: 7px; border-bottom: 2px solid #888; flex: none; }
    .cmd { display: flex; height: 60px; padding-top: 7px; flex: none; }
    .cmd .grip { margin: 0 3px 4px 6px; width: 4px; }
    .log { flex: 1; min-width: 0; background: #fff; border: solid #777; border-width: 2px 0 0 2px; display: flex; flex-direction: column; font: 14px "Noto Sans CJK SC", sans-serif; }
    .log p { margin: 0; line-height: 15px; height: 15px; white-space: pre; }
    .log code { font: 12px/12px "Liberation Mono", monospace; }
    .hist { flex: 1; border-bottom: 1px solid #ccc; min-height: 0; }
    .prompt { display: flex; height: 18px; align-items: center; }
    .prompt label { padding-left: 1px; line-height: 16px; font-size: 14px; }
    .prompt input { flex: 1; min-width: 0; border: 0; outline: 0; height: 14px; padding: 0; font: 12px "Liberation Mono", monospace; background: none; }
    .scroll { display: flex; width: 81px; height: 18px; background: #f0f0f0; align-items: center; gap: 2px; padding-left: 2px; }
    .scroll span { width: 15px; height: 14px; background: #cdcdcd; }
    .status { display: flex; height: 21px; align-items: center; flex: none; padding: 3px 0 0 3px; font: 11px "Noto Sans CJK SC", sans-serif; gap: 3px; white-space: nowrap; }
    .coord { width: 168px; height: 16px; border: 1px solid #aaa; border-right-color: #ddd; font: 9px "Liberation Mono", monospace; line-height: 15px; white-space: pre; }
    .status .tg { height: 17px; line-height: 15px; padding: 0 1px; border: 1px solid #f0f0f0; border-right-color: #aaa; }
    .status .tg.on { border-color: #222 #ddd #f0f0f0 #222; background: #f5f5f5; }
    .status .tg.mono { font: 9px "Liberation Mono", monospace; }
    .tray { margin-left: auto; display: flex; align-items: center; gap: 7px; }
    .tray .scale { gap: 7px; }
    .tray .scale span { font: 10px "Liberation Mono", monospace; }
    .pair { display: flex; align-items: center; gap: 4px; height: 17px; padding: 0 3px; border: solid #999; border-width: 1px 0 0 1px; border-right: 1px solid #ccc; }
    .balloon { position: absolute; right: 24px; bottom: 27px; width: 231px; height: 94px; border: 1px solid #222; border-radius: 13px; background: #ffffe1; padding: 6px 7px 0 12px; font: 11px/11px "Noto Sans CJK SC", sans-serif; white-space: nowrap; }
    .balloon header { display: flex; align-items: center; gap: 6px; height: 18px; }
    .balloon header strong { flex: 1; font-size: 12px; line-height: 16px; }
    .balloon header button { width: 14px; height: 14px; border: 1px solid #999; background: #f2f2f2; }
    .balloon p { margin: 4px 0 5px; }
    .balloon a { color: #00f; display: block; text-decoration: underline; }
    .balloon p.last { margin: 9px 0 0; }
    .balloon code { font: 9px "Liberation Mono", monospace; }
    .tail { position: absolute; right: 50px; top: 100%; margin-top: -1px; }
    .mark { position: absolute; left: 4px; bottom: 8px; display: flex; align-items: center; gap: 4px; pointer-events: none; color: #fff; font: 500 21px/22px "Noto Sans CJK SC", sans-serif; opacity: .8; text-shadow: 0 0 2px #666, 1px 1px 1px #888; }
  `];

  private down(color = "#111") {
    return html`<svg width="7" height="5" viewBox="0 0 7 5"><path d="M0 0h7L3.500 4z" fill=${color}/></svg>`;
  }

  render() {
    const menus = ["文件(F)", "编辑(E)", "视图(V)", "插入(I)", "格式(O)", "工具(T)", "绘图(D)", "标注(N)", "修改(M)", "Express", "窗口(W)", "帮助(H)"];
    const std = ["new", "open", "save", "|", "print", "preview", "publish", "web", "|", "brush", "match", "|", "undo", "v", "redo", "x", "|", "props", "design", "palette", "sheets", "markup", "calc", "|", "help"];
    const toggles: [string, boolean][] = [["捕捉", false], ["栅格", false], ["正交", false], ["极轴", true], ["对象捕捉", true], ["对象追踪", true], ["DUCS", true], ["DYN", true], ["线宽", false], ["模型", true]];
    const navs = ["M3 3v6M9 3 5 6l4 3z", "M9 2 4 6l5 4z", "m4 2 5 4-5 4z", "M10 3v6M4 3l4 3-4 3z"];
    return html`
      <header class="title">${ic("app", 14)}<h1>AutoCAD 2008 - [Drawing1.dwg]</h1>
        <div class="win">
          <button aria-label="最小化"><svg width="10" height="10"><path d="M0 5.500h10" stroke="#333"/></svg></button>
          <button aria-label="最大化"><svg width="10" height="10"><path d="M.5.500h9v9h-9z" fill="none" stroke="#111"/></svg></button>
          <button aria-label="关闭"><svg width="10" height="10"><path d="m.5.500 9 9m0-9-9 9" stroke="#222"/></svg></button>
        </div>
      </header>
      <div class="menu">${ic("doc", 15)}
        <nav>${menus.map(m => html`<button>${m}</button>`)}</nav>
        <input class="ask" aria-label="帮助" placeholder="Type a question for help">
        <div class="info"><button class="wide" aria-label="搜索">${ic("search", 13)}<svg width="5" height="3"><path d="M0 0h5L2.500 3z" fill="#333"/></svg></button><button aria-label="通讯中心">${ic("dish", 13)}</button><button aria-label="收藏夹">${ic("star", 13)}</button></div>
        <div class="mdi">
          <button aria-label="最小化图形"><svg width="8" height="8"><path d="M1 6h6" stroke="#607086" stroke-width="2"/></svg></button>
          <button aria-label="还原图形"><svg width="8" height="8"><path d="M2.500 3V1h5v4H5.500M.5 3.500h5v4h-5zM.5 4h5" fill="none" stroke="#607086"/></svg></button>
          <button aria-label="关闭图形"><svg width="8" height="8"><path d="m1 1 6 6m0-6L1 7" stroke="#607086" stroke-width="1.700"/></svg></button>
        </div>
      </div>
      <div class="bar">
        <span class="grip"></span>
        <div class="group"><cad-combo tall label="工作空间" value="二维草图与注释"></cad-combo><button aria-label="工作空间设置">${ic("gear")}</button><button aria-label="我的工作空间">${ic("home")}</button></div>
        <span class="grip"></span>
        <div class="group">${std.map(n => n === "|" ? html`<i></i>`
          : n === "v" || n === "x" ? html`<button class="dd" aria-label="更多"><svg width="5" height="3"><path d="M0 0h5L2.500 3z" fill=${n === "v" ? "#1a1a80" : "#aaa"}/></svg></button>`
          : html`<button class=${n === "save" ? "on" : ""} aria-label=${n}>${ic(n)}</button>`)}</div>
      </div>
      <div class="main">
        <div class="left">
          <div class="canvas">
            <span class="handle"></span>
            <svg class="ucs" width="150" height="140" viewBox="-10 -12 150 140">
              <g fill="none" stroke="#fff"><path d="M3.500 101.500h13v13h-13zM10.500 114V46M3 107.500h70"/><path d="m10.500 30 6 16h-12zM89 107.500l-16-6v12zM10.500 30l-2 16m2-16 2 16M89 107.500l-16-2m16 2-16 2" stroke="#ccc"/></g>
              <g fill="#ddd" font-family="Lato" font-weight="300" font-size="24" text-anchor="middle"><text x="12" y="19">Y</text><text x="108" y="117">X</text></g>
            </svg>
          </div>
          <div class="tabs">
            ${navs.map(d => html`<button class="nav" aria-label="布局导航"><svg width="12" height="12"><path d=${d} fill="#555" stroke="#555"/></svg></button>`)}
            <button class="tab model">Model</button><button class="tab">布局1</button>
            <svg class="slash" width="6" height="14"><path d="M0 14 6 0" stroke="#333"/></svg><button class="tab">布局2</button>
            <svg class="slash" width="6" height="14"><path d="M0 14 6 0" stroke="#333"/></svg>
          </div>
          <div class="split"></div>
          <div class="cmd"><span class="grip"></span>
            <div class="log">
              <div class="hist"><p>加载自定义文件成功。自定义组：<code>EXPRESS</code></p><p><code>AutoCAD </code>菜单实用程序已加载。</p></div>
              <div class="prompt"><label for="cmdline">命令:</label><input id="cmdline"><div class="scroll"><svg width="14" height="14"><path d="M9 4 6 7l3 3" fill="none" stroke="#444" stroke-width="1.500"/></svg><span></span></div></div>
            </div>
          </div>
        </div>
        <cad-dashboard></cad-dashboard>
      </div>
      <footer class="status">
        <div class="coord">2967.6175, 3361.6705, 0.0000</div>
        ${toggles.map(([t, on]) => html`<button class="tg ${on ? "on" : ""} ${/^D/.test(t) ? "mono" : ""}" aria-pressed=${on}>${t}</button>`)}
        <div class="tray"><button class="scale">注释比例: <span>1:1</span>${this.down()}</button>
          <button aria-label="注释可见性">${ic("scaleVis", 14)}</button><button aria-label="自动添加比例">${ic("scaleAuto", 14)}</button>
          <div class="pair">${ic("wrench", 14)}${ic("trayLock", 14)}</div>${this.down()}
          <button aria-label="全屏显示">${ic("clean", 15)}</button>
          <svg width="8" height="14"><path d="M6 4v2m0 2v2m0 2v2M3 8v2m0 2v2M0 12v2" stroke="#aaa" stroke-width="2"/></svg>
        </div>
      </footer>
      <div class="mark"><svg width="46" height="24" viewBox="0 0 46 24"><g fill="none" stroke="#aaa" stroke-width="5"><circle cx="26" cy="8" r="5"/><circle cx="38" cy="8" r="5"/><path d="M20 8C12 2 4 6 5 13s10 11 15 3"/></g><g fill="none" stroke="#fff" stroke-width="3"><circle cx="26" cy="8" r="5"/><circle cx="38" cy="8" r="5"/><path d="M20 8C12 2 4 6 5 13s10 11 15 3"/></g></svg><span>大数跨境</span></div>
      <aside class="balloon">
        <header>${ic("info", 14)}<strong>性能调节器</strong><button aria-label="关闭"><svg width="10" height="10"><path d="m2 2 6 6m0-6L2 8" stroke="#000" stroke-width="2"/></svg></button></header>
        <p>性能调节器已经分析了图形卡及驱动程序，<br>将为三维功能提供优化的三维图形显示。</p>
        <a href="#">单击以查看结果。</a>
        <p class="last">要手动调整设置，请输入 <code>3dconfig</code>。</p>
        <svg class="tail" width="20" height="19" viewBox="0 0 20 19"><path d="M1 0v1.500l17 16V0z" fill="#ffffe1"/><path d="m1 1.500 17 16V1" fill="none" stroke="#222"/></svg>
      </aside>`;
  }
}
